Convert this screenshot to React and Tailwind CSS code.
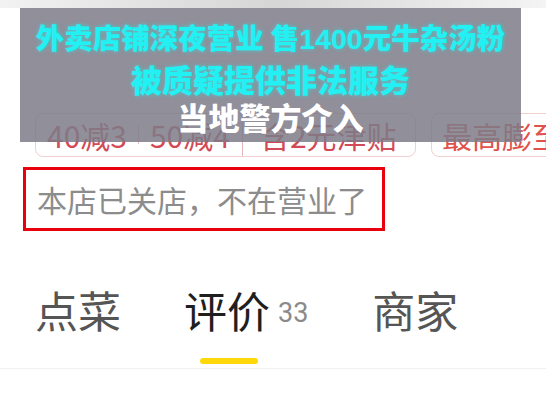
import React from "react"

const cjk = { fontFamily: '"Noto Sans CJK SC", "Noto Sans", sans-serif' }
const digits = { fontFamily: '"Liberation Sans", "Noto Sans CJK SC", sans-serif' }

const Tabs = () => (
    <div className="relative mt-[38px]">
        <div className="flex items-end h-[62px]">
            <div className="ml-[35px] w-[86px] text-[43px] leading-none text-[#555555]">点菜</div>
            <div className="ml-[63px] flex items-end relative">
                <span className="text-[43px] leading-none text-[#1f1f1f]">评价</span>
                <span className="ml-[8px] mb-[4px] text-[27px] leading-none text-[#8a8a8a]" style={{ fontFamily: '"Roboto", sans-serif' }}>33</span>
            </div>
            <div className="ml-[64px] text-[43px] leading-none text-[#555555]">商家</div>
        </div>
        <div className="ml-[200px] mt-[27px] w-[58px] h-[6px] rounded-full bg-[#ffd80a]" />
        <div className="mt-[4px] h-px bg-[#f1f1f1]" />
    </div>
)

export default function App() {
    return (
        <div className="relative w-[546px] h-[408px] overflow-hidden bg-white" style={cjk}>
            {/* blurred top strip */}
            <div className="h-[8px] bg-gradient-to-r from-[#f2f2f2] via-[#d6d6d6] to-[#f4f4f4]" />

            <div className="pt-[105px]">
                {/* discount tags */}
                <div className="flex items-center gap-[15px] pl-[35px] whitespace-nowrap">
                    <div className="flex items-center h-[44px] w-[381px] shrink-0 rounded-[8px] border border-[#f1cfd2] text-[30px] leading-none text-[#d24a55]">
                        <span className="ml-[11px]">40减3</span>
                        <span className="mx-[11px] h-[18px] w-px bg-[#e6c2c5]" />
                        <span>50减4</span>
                        <span className="ml-[12px] self-stretch w-px bg-[#e6b4b9]" />
                        <span className="ml-[17px]">含2元津贴</span>
                    </div>
                    <div className="flex items-center h-[44px] shrink-0 rounded-[8px] border border-[#f2d0cc] pl-[10px] pr-4 text-[30px] leading-none text-[#e0524b]">
                        最高膨至10元
                    </div>
                </div>

                {/* closed notice */}
                <div className="ml-[23px] mt-[10px] w-[362px] h-[64px] border-[3px] border-[#e8000d] flex items-center pl-[11px]">
                    <span className="text-[30px] leading-none text-[#8c8c8c]">本店已关店，不在营业了</span>
                </div>

                <Tabs />
            </div>

            {/* caption overlay */}
            <div className="absolute left-[20px] top-[8px] w-[501px] h-[134px] bg-[#7d7b88]/85 flex flex-col items-center pt-[10px] font-black text-[31px] leading-[38px] whitespace-nowrap">
                <div className="text-[28.5px] text-[#22f0f2] [text-shadow:0_0_4px_rgba(34,240,242,0.6)]">
                    外卖店铺深夜营业<span className="inline-block w-[7px]" />售<span style={digits} className="font-bold">1400</span>元牛杂汤粉
                </div>
                <div className="mt-[2px] text-[#22f0f2] [text-shadow:0_0_4px_rgba(34,240,242,0.6)]">被质疑提供非法服务</div>
                <div className="text-white">当地警方介入</div>
            </div>
        </div>
    )
}
